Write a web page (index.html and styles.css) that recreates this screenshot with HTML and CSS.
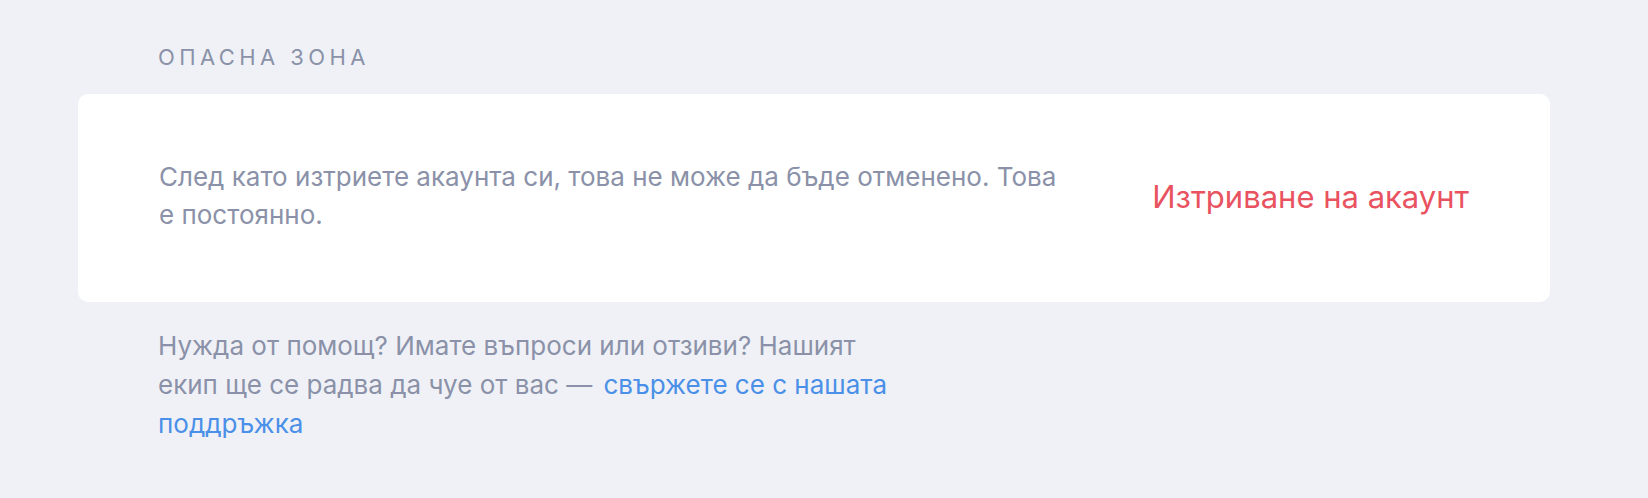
FILE: index.html
```html
<!DOCTYPE html>
<html lang="bg">
<head>
    <meta charset="UTF-8">
    <meta name="viewport" content="width=device-width, initial-scale=1.0">
    <title>Опасна зона</title>
    <link rel="stylesheet" href="styles.css">
</head>
<body>
    <div class="settings">
        <!-- Danger zone -->
        <h2 class="section-title">Опасна зона</h2>
        <div class="card">
            <p class="card-text">След като изтриете акаунта си, това не може да бъде отменено. Това е постоянно.</p>
            <button class="delete">Изтриване на акаунт</button>
        </div>

        <!-- Help -->
        <p class="help">
            Нужда от помощ? Имате въпроси или отзиви? Нашият екип ще се радва да чуе от вас —
            <a href="#" class="help-link">свържете се с нашата поддръжка</a>
        </p>
    </div>
</body>
</html>
```

FILE: styles.css
```css
/* Reset and base styles */
* {
    margin: 0;
    padding: 0;
    box-sizing: border-box;
}

body {
    font-family: Inter, "Noto Sans", sans-serif;
    background-color: #f0f1f6;
    color: #8a91a8;
}

/* Page container */
.settings {
    padding: 41px 98px 0 78px;
}

/* Section title */
.section-title {
    font-size: 22px;
    font-weight: 400;
    line-height: 32px;
    letter-spacing: 0.2em;
    text-transform: uppercase;
    color: #8a91a8;
    padding-left: 80px;
    margin-bottom: 21px;
}

/* Card */
.card {
    background-color: #fff;
    border-radius: 10px;
    height: 208px;
    padding: 0 81px 4px;
    display: flex;
    align-items: center;
    justify-content: space-between;
}

.card-text {
    font-size: 26px;
    line-height: 38px;
    max-width: 900px;
}

.delete {
    font-family: inherit;
    font-size: 31px;
    color: #e8535f;
    background: none;
    border: none;
    cursor: pointer;
}

/* Help text */
.help {
    font-size: 26px;
    line-height: 39px;
    max-width: 740px;
    margin: 24px 0 0 80px;
}

.help-link {
    color: #4a90e8;
    text-decoration: none;
    margin-left: 4px;
}

.help-link:hover {
    text-decoration: underline;
}
```
